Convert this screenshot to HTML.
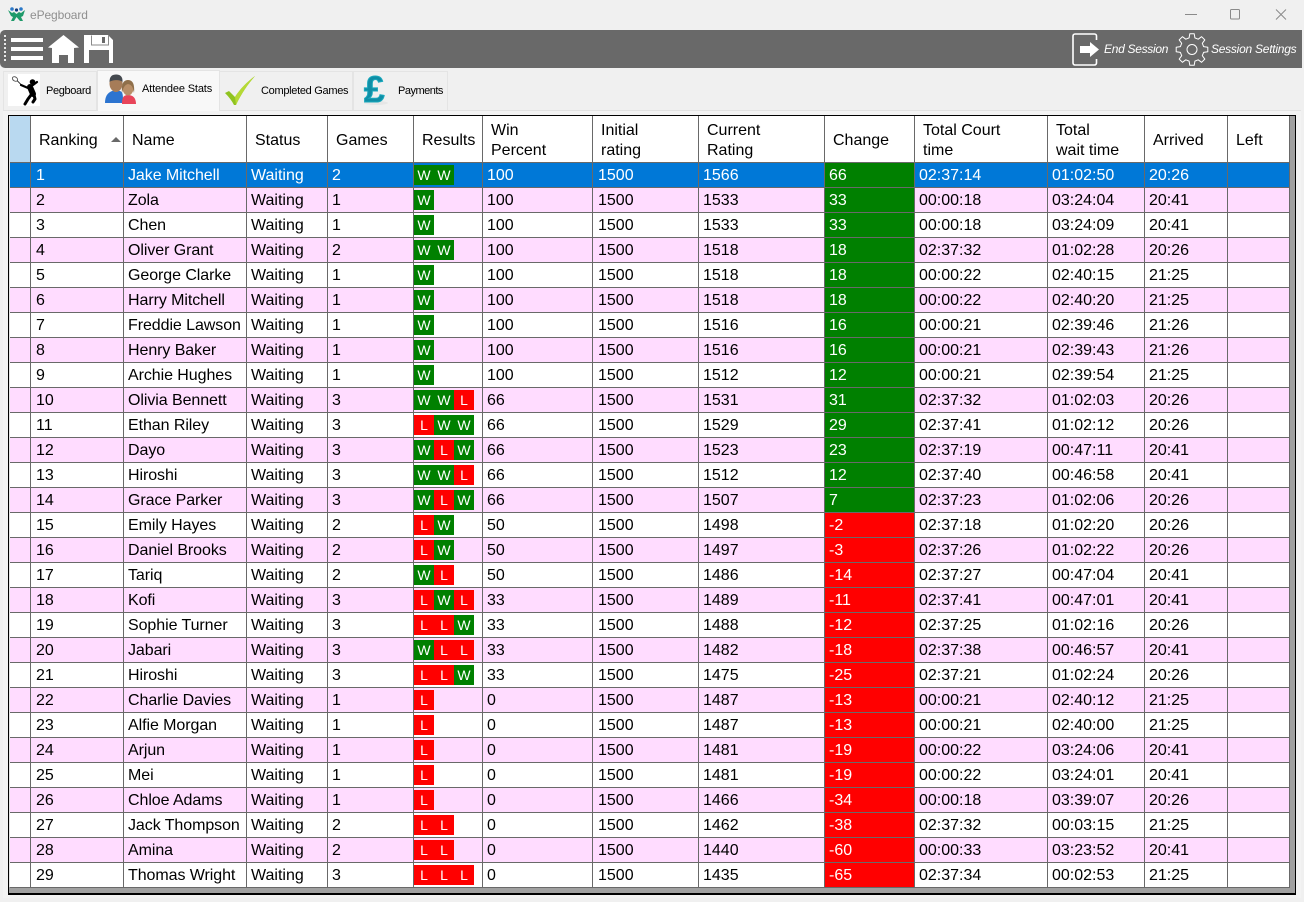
<!DOCTYPE html>
<html><head><meta charset="utf-8"><title>ePegboard</title>
<style>
*{box-sizing:border-box}
html,body{margin:0;padding:0;width:1304px;height:902px;overflow:hidden;background:#f0f0f0;font-family:"Liberation Sans",Arial,sans-serif}
.abs,svg{position:absolute}
#title{left:30px;top:8px;font-size:12px;color:#8f8f8f;line-height:14px;letter-spacing:-.1px}
#bar{left:0;top:30px;width:1302px;height:38px;background:#696969;border-radius:5px 0 0 5px}
.tl{color:#fff;font-style:italic;font-size:12px;line-height:14px;white-space:nowrap;letter-spacing:-.3px}
.tab{background:#f0f0f0;border:1px solid #e4e4e4;border-bottom:0}
.tt{font-size:11px;line-height:14px;color:#000;white-space:nowrap}
#frame{left:8px;top:115px;width:1288px;height:780px;border:1px solid #000;border-bottom-width:2px;background:#a0a0a0}
#strip{left:9px;top:116px;width:1px;height:771px;background:#e4e4e4}
#panel{left:3px;top:110px;width:1298px;height:788px;background:#f3f3f3;border-top:1px solid #e2e2e2}
table{position:absolute;left:10px;top:116px;border-collapse:separate;border-spacing:0;table-layout:fixed;width:1280px;font-size:16px;color:#000}
td,th{border-right:1px solid #696969;border-bottom:1px solid #696969;padding:2px 0 0 4px;height:25px;line-height:22px;white-space:nowrap;overflow:hidden;background:#fff;font-weight:400;text-align:left}
th{height:47px;padding-left:8px;line-height:20px;vertical-align:middle;padding-top:4px}
th:first-child{background:#b9d9f0}
td:nth-child(2),td:nth-child(8){padding-left:5px}
td:nth-child(3){letter-spacing:-.07px}
tr.p td{background:#ffdcff}
tr.s td{background:#0078d7;color:#fff}
td.g,tr.p td.g,tr.s td.g{background:#008000;color:#fff}
td.r,tr.p td.r{background:#f00;color:#fff}
td.c{padding:0;vertical-align:top}
td.c span{display:flex;margin-top:2px;height:20px}
b{display:block;width:20px;height:20px;line-height:20px;text-align:center;font-weight:400;font-size:14px;color:#fff}
b.w{background:#008000}b.l{background:#f00}
</style></head><body>
<svg style="left:8px;top:7px" width="17" height="14" viewBox="0 0 17 14"><path d="M0 3l4 3 2-1 2.500 2L11 5l2 1 4-3-2 6-2 1 2 4h-3L8.500 10 6 14H3l2-4-2-1z" fill="#1f9a6a"/><circle cx="4" cy="2" r="1.800" fill="#2a78c8"/><circle cx="13" cy="2" r="1.800" fill="#2a78c8"/><circle cx="8.500" cy="3" r="1.600" fill="#123a7a"/></svg>
<div class="abs" id="title">ePegboard</div>
<svg style="left:1184px;top:8px" width="110" height="14" viewBox="0 0 110 14" fill="none" stroke="#8a8a8a" stroke-width="1"><path d="M1 6.500h12"/><rect x="46.500" y="1.500" width="9" height="9.500" rx="1"/><path d="M92 1.500l10 10M102 1.500l-10 10"/></svg>

<div class="abs" id="bar"></div>
<svg style="left:3px;top:32px" width="4" height="34" viewBox="0 0 4 34"><g fill="#e8e8e8"><rect x="1" y="3" width="2" height="2"/><rect x="1" y="7" width="2" height="2"/><rect x="1" y="11" width="2" height="2"/><rect x="1" y="15" width="2" height="2"/><rect x="1" y="19" width="2" height="2"/><rect x="1" y="23" width="2" height="2"/><rect x="1" y="27" width="2" height="2"/></g></svg>
<svg style="left:10px;top:35px" width="105" height="29" viewBox="0 0 105 29"><g fill="#fff"><rect x="1" y="3" width="32" height="4"/><rect x="1" y="12" width="32" height="4"/><rect x="1" y="21" width="32" height="4"/><path d="M38 12.500L53.500 0 69 12.500l-5 .500v15H58V20H49v8H42V13z"/><path fill-rule="evenodd" d="M74 0h24l5 5v23H74zM79 15v13h20V15z"/></g><path d="M81.500 .500v9.500h17V.500" fill="none" stroke="#8a8a8a"/><rect x="92" y="2" width="3" height="6" fill="#696969"/></svg>

<svg style="left:1072px;top:33px" width="28" height="33" viewBox="0 0 28 33"><path d="M24.500 7V3a2 2 0 0 0-2-2H3a2 2 0 0 0-2 2v27a2 2 0 0 0 2 2h19.500a2 2 0 0 0 2-2v-4" fill="none" stroke="#fff" stroke-width="1.600"/><path d="M8 13h10V9l9 7.500L18 24v-4H8z" fill="#fff"/></svg>
<div class="abs tl" style="left:1104px;top:42px">End Session</div>
<svg style="left:1175px;top:33px" width="34" height="33" viewBox="0 0 34 33" fill="none" stroke="#fff" stroke-width="1" stroke-linejoin="round"><circle cx="17" cy="16.500" r="5"/><path d="M14.100 4.900L14.800 .7H19.200L19.900 4.900L23.200 6.200L26.600 3.700L29.800 6.900L27.300 10.300L28.600 13.600L32.800 14.300V18.700L28.600 19.400L27.300 22.700L29.800 26.100L26.600 29.300L23.200 26.800L19.900 28.100L19.200 32.300H14.800L14.100 28.100L10.800 26.800L7.400 29.300L4.200 26.100L6.700 22.700L5.400 19.400L1.200 18.700V14.300L5.400 13.600L6.700 10.300L4.200 6.900L7.400 3.700L10.800 6.200z"/></svg>
<div class="abs tl" style="left:1211px;top:42px;letter-spacing:-.25px">Session Settings</div>

<div class="abs tab" style="left:3px;top:71px;width:94px;height:39px"></div>
<div class="abs tab" style="left:219px;top:71px;width:134px;height:39px"></div>
<div class="abs tab" style="left:353px;top:71px;width:95px;height:39px"></div>
<div class="abs" id="panel"></div>
<div class="abs tab" style="left:97px;top:70px;width:123px;height:41px;background:#f8f8f8;z-index:2"></div>

<svg style="left:8px;top:74px;z-index:3" width="32" height="32" viewBox="0 0 32 32"><rect width="32" height="32" fill="#fff"/><ellipse cx="7" cy="5" rx="2.800" ry="2" fill="none" stroke="#555" transform="rotate(35 7 5)"/><g fill="none" stroke="#000" stroke-linecap="round" stroke-linejoin="round"><path d="M9.500 7l4 4" stroke-width=".8"/><path d="M13 11l7 3" stroke-width="2.200"/><path d="M22 13l3 7" stroke-width="6"/><path d="M25 11l4-3" stroke-width="2.200"/><path d="M23 21l-3 4-3 5" stroke-width="3"/><path d="M26 21l1 4-2 3" stroke-width="3"/></g><circle cx="24.500" cy="8" r="2.800" fill="#000"/></svg>
<div class="abs tt" style="left:46px;top:84px;letter-spacing:-.35px;z-index:3">Pegboard</div>

<svg style="left:104px;top:74px;z-index:3" width="33" height="31" viewBox="0 0 33 31"><path d="M1 29c0-6 2-10 7-12h8c3 1 3 4 3 12z" fill="#2c74d0"/><ellipse cx="12" cy="9.500" rx="6.500" ry="8.500" fill="#a67c58"/><path d="M5.500 8c0-6 3-7.500 6.500-7.500s7 1.500 6.500 7.500c-2-2.500-10-2.500-13 0z" fill="#44494f"/><path d="M18 30c0-6 1-9 6-9 5 0 8 3 8 9z" fill="#e8455a"/><ellipse cx="24" cy="14" rx="5.500" ry="7.500" fill="#b98f68"/><path d="M18 19c-1-10 2-13 6-13s7 3 6 13c-1-4-1-8-6-9-4 1-5 5-6 9z" fill="#8f6f4a"/></svg>
<div class="abs tt" style="left:142px;top:82px;letter-spacing:-.15px;z-index:3">Attendee Stats</div>

<svg style="left:224px;top:75px;z-index:3" width="32" height="31" viewBox="0 0 32 31"><path d="M1 18l4-2 6 6C16 14 23 7 31 1 24 9 17 19 12 30h-2C8 26 5 22 1 18z" fill="#8fc31f"/><path d="M11 22C16 14 23 7 31 1 24 9 17 19 12 30z" fill="#b5d935"/></svg>
<div class="abs tt" style="left:261px;top:84px;letter-spacing:-.3px;z-index:3">Completed Games</div>

<svg style="left:363px;top:72px;z-index:3" width="28" height="34" viewBox="0 0 28 34"><ellipse cx="13" cy="31" rx="12" ry="2" fill="#e6e6e6"/><text x="1" y="30" font-family="Liberation Sans" font-weight="700" font-size="37" fill="#0f8ea6" stroke="#1aa9bd" stroke-width="1">£</text></svg>
<div class="abs tt" style="left:398px;top:84px;letter-spacing:-.5px;z-index:3">Payments</div>

<div class="abs" id="frame"></div>
<div class="abs" id="strip"></div>
<table>
<colgroup><col style="width:21px"><col style="width:93px"><col style="width:123px"><col style="width:81px"><col style="width:86px"><col style="width:69px"><col style="width:110px"><col style="width:106px"><col style="width:126px"><col style="width:90px"><col style="width:133px"><col style="width:97px"><col style="width:83px"><col style="width:62px"></colgroup>
<tr><th></th><th>Ranking<svg style="left:101px;top:21px;position:absolute" width="10" height="5"><path d="M5 0l5 5H0z" fill="#696969"/></svg></th><th>Name</th><th>Status</th><th>Games</th><th>Results</th><th>Win<br>Percent</th><th>Initial<br>rating</th><th>Current<br>Rating</th><th>Change</th><th>Total Court<br>time</th><th>Total<br>wait time</th><th>Arrived</th><th>Left</th></tr>
<tr class="s"><td></td><td>1</td><td>Jake Mitchell</td><td>Waiting</td><td>2</td><td class="c"><span><b class="w">W</b><b class="w">W</b></span></td><td>100</td><td>1500</td><td>1566</td><td class="g">66</td><td>02:37:14</td><td>01:02:50</td><td>20:26</td><td></td></tr>
<tr class="p"><td></td><td>2</td><td>Zola</td><td>Waiting</td><td>1</td><td class="c"><span><b class="w">W</b></span></td><td>100</td><td>1500</td><td>1533</td><td class="g">33</td><td>00:00:18</td><td>03:24:04</td><td>20:41</td><td></td></tr>
<tr><td></td><td>3</td><td>Chen</td><td>Waiting</td><td>1</td><td class="c"><span><b class="w">W</b></span></td><td>100</td><td>1500</td><td>1533</td><td class="g">33</td><td>00:00:18</td><td>03:24:09</td><td>20:41</td><td></td></tr>
<tr class="p"><td></td><td>4</td><td>Oliver Grant</td><td>Waiting</td><td>2</td><td class="c"><span><b class="w">W</b><b class="w">W</b></span></td><td>100</td><td>1500</td><td>1518</td><td class="g">18</td><td>02:37:32</td><td>01:02:28</td><td>20:26</td><td></td></tr>
<tr><td></td><td>5</td><td>George Clarke</td><td>Waiting</td><td>1</td><td class="c"><span><b class="w">W</b></span></td><td>100</td><td>1500</td><td>1518</td><td class="g">18</td><td>00:00:22</td><td>02:40:15</td><td>21:25</td><td></td></tr>
<tr class="p"><td></td><td>6</td><td>Harry Mitchell</td><td>Waiting</td><td>1</td><td class="c"><span><b class="w">W</b></span></td><td>100</td><td>1500</td><td>1518</td><td class="g">18</td><td>00:00:22</td><td>02:40:20</td><td>21:25</td><td></td></tr>
<tr><td></td><td>7</td><td>Freddie Lawson</td><td>Waiting</td><td>1</td><td class="c"><span><b class="w">W</b></span></td><td>100</td><td>1500</td><td>1516</td><td class="g">16</td><td>00:00:21</td><td>02:39:46</td><td>21:26</td><td></td></tr>
<tr class="p"><td></td><td>8</td><td>Henry Baker</td><td>Waiting</td><td>1</td><td class="c"><span><b class="w">W</b></span></td><td>100</td><td>1500</td><td>1516</td><td class="g">16</td><td>00:00:21</td><td>02:39:43</td><td>21:26</td><td></td></tr>
<tr><td></td><td>9</td><td>Archie Hughes</td><td>Waiting</td><td>1</td><td class="c"><span><b class="w">W</b></span></td><td>100</td><td>1500</td><td>1512</td><td class="g">12</td><td>00:00:21</td><td>02:39:54</td><td>21:25</td><td></td></tr>
<tr class="p"><td></td><td>10</td><td>Olivia Bennett</td><td>Waiting</td><td>3</td><td class="c"><span><b class="w">W</b><b class="w">W</b><b class="l">L</b></span></td><td>66</td><td>1500</td><td>1531</td><td class="g">31</td><td>02:37:32</td><td>01:02:03</td><td>20:26</td><td></td></tr>
<tr><td></td><td>11</td><td>Ethan Riley</td><td>Waiting</td><td>3</td><td class="c"><span><b class="l">L</b><b class="w">W</b><b class="w">W</b></span></td><td>66</td><td>1500</td><td>1529</td><td class="g">29</td><td>02:37:41</td><td>01:02:12</td><td>20:26</td><td></td></tr>
<tr class="p"><td></td><td>12</td><td>Dayo</td><td>Waiting</td><td>3</td><td class="c"><span><b class="w">W</b><b class="l">L</b><b class="w">W</b></span></td><td>66</td><td>1500</td><td>1523</td><td class="g">23</td><td>02:37:19</td><td>00:47:11</td><td>20:41</td><td></td></tr>
<tr><td></td><td>13</td><td>Hiroshi</td><td>Waiting</td><td>3</td><td class="c"><span><b class="w">W</b><b class="w">W</b><b class="l">L</b></span></td><td>66</td><td>1500</td><td>1512</td><td class="g">12</td><td>02:37:40</td><td>00:46:58</td><td>20:41</td><td></td></tr>
<tr class="p"><td></td><td>14</td><td>Grace Parker</td><td>Waiting</td><td>3</td><td class="c"><span><b class="w">W</b><b class="l">L</b><b class="w">W</b></span></td><td>66</td><td>1500</td><td>1507</td><td class="g">7</td><td>02:37:23</td><td>01:02:06</td><td>20:26</td><td></td></tr>
<tr><td></td><td>15</td><td>Emily Hayes</td><td>Waiting</td><td>2</td><td class="c"><span><b class="l">L</b><b class="w">W</b></span></td><td>50</td><td>1500</td><td>1498</td><td class="r">-2</td><td>02:37:18</td><td>01:02:20</td><td>20:26</td><td></td></tr>
<tr class="p"><td></td><td>16</td><td>Daniel Brooks</td><td>Waiting</td><td>2</td><td class="c"><span><b class="l">L</b><b class="w">W</b></span></td><td>50</td><td>1500</td><td>1497</td><td class="r">-3</td><td>02:37:26</td><td>01:02:22</td><td>20:26</td><td></td></tr>
<tr><td></td><td>17</td><td>Tariq</td><td>Waiting</td><td>2</td><td class="c"><span><b class="w">W</b><b class="l">L</b></span></td><td>50</td><td>1500</td><td>1486</td><td class="r">-14</td><td>02:37:27</td><td>00:47:04</td><td>20:41</td><td></td></tr>
<tr class="p"><td></td><td>18</td><td>Kofi</td><td>Waiting</td><td>3</td><td class="c"><span><b class="l">L</b><b class="w">W</b><b class="l">L</b></span></td><td>33</td><td>1500</td><td>1489</td><td class="r">-11</td><td>02:37:41</td><td>00:47:01</td><td>20:41</td><td></td></tr>
<tr><td></td><td>19</td><td>Sophie Turner</td><td>Waiting</td><td>3</td><td class="c"><span><b class="l">L</b><b class="l">L</b><b class="w">W</b></span></td><td>33</td><td>1500</td><td>1488</td><td class="r">-12</td><td>02:37:25</td><td>01:02:16</td><td>20:26</td><td></td></tr>
<tr class="p"><td></td><td>20</td><td>Jabari</td><td>Waiting</td><td>3</td><td class="c"><span><b class="w">W</b><b class="l">L</b><b class="l">L</b></span></td><td>33</td><td>1500</td><td>1482</td><td class="r">-18</td><td>02:37:38</td><td>00:46:57</td><td>20:41</td><td></td></tr>
<tr><td></td><td>21</td><td>Hiroshi</td><td>Waiting</td><td>3</td><td class="c"><span><b class="l">L</b><b class="l">L</b><b class="w">W</b></span></td><td>33</td><td>1500</td><td>1475</td><td class="r">-25</td><td>02:37:21</td><td>01:02:24</td><td>20:26</td><td></td></tr>
<tr class="p"><td></td><td>22</td><td>Charlie Davies</td><td>Waiting</td><td>1</td><td class="c"><span><b class="l">L</b></span></td><td>0</td><td>1500</td><td>1487</td><td class="r">-13</td><td>00:00:21</td><td>02:40:12</td><td>21:25</td><td></td></tr>
<tr><td></td><td>23</td><td>Alfie Morgan</td><td>Waiting</td><td>1</td><td class="c"><span><b class="l">L</b></span></td><td>0</td><td>1500</td><td>1487</td><td class="r">-13</td><td>00:00:21</td><td>02:40:00</td><td>21:25</td><td></td></tr>
<tr class="p"><td></td><td>24</td><td>Arjun</td><td>Waiting</td><td>1</td><td class="c"><span><b class="l">L</b></span></td><td>0</td><td>1500</td><td>1481</td><td class="r">-19</td><td>00:00:22</td><td>03:24:06</td><td>20:41</td><td></td></tr>
<tr><td></td><td>25</td><td>Mei</td><td>Waiting</td><td>1</td><td class="c"><span><b class="l">L</b></span></td><td>0</td><td>1500</td><td>1481</td><td class="r">-19</td><td>00:00:22</td><td>03:24:01</td><td>20:41</td><td></td></tr>
<tr class="p"><td></td><td>26</td><td>Chloe Adams</td><td>Waiting</td><td>1</td><td class="c"><span><b class="l">L</b></span></td><td>0</td><td>1500</td><td>1466</td><td class="r">-34</td><td>00:00:18</td><td>03:39:07</td><td>20:26</td><td></td></tr>
<tr><td></td><td>27</td><td>Jack Thompson</td><td>Waiting</td><td>2</td><td class="c"><span><b class="l">L</b><b class="l">L</b></span></td><td>0</td><td>1500</td><td>1462</td><td class="r">-38</td><td>02:37:32</td><td>00:03:15</td><td>21:25</td><td></td></tr>
<tr class="p"><td></td><td>28</td><td>Amina</td><td>Waiting</td><td>2</td><td class="c"><span><b class="l">L</b><b class="l">L</b></span></td><td>0</td><td>1500</td><td>1440</td><td class="r">-60</td><td>00:00:33</td><td>03:23:52</td><td>20:41</td><td></td></tr>
<tr><td></td><td>29</td><td>Thomas Wright</td><td>Waiting</td><td>3</td><td class="c"><span><b class="l">L</b><b class="l">L</b><b class="l">L</b></span></td><td>0</td><td>1500</td><td>1435</td><td class="r">-65</td><td>02:37:34</td><td>00:02:53</td><td>21:25</td><td></td></tr>
</table>
</body></html>
